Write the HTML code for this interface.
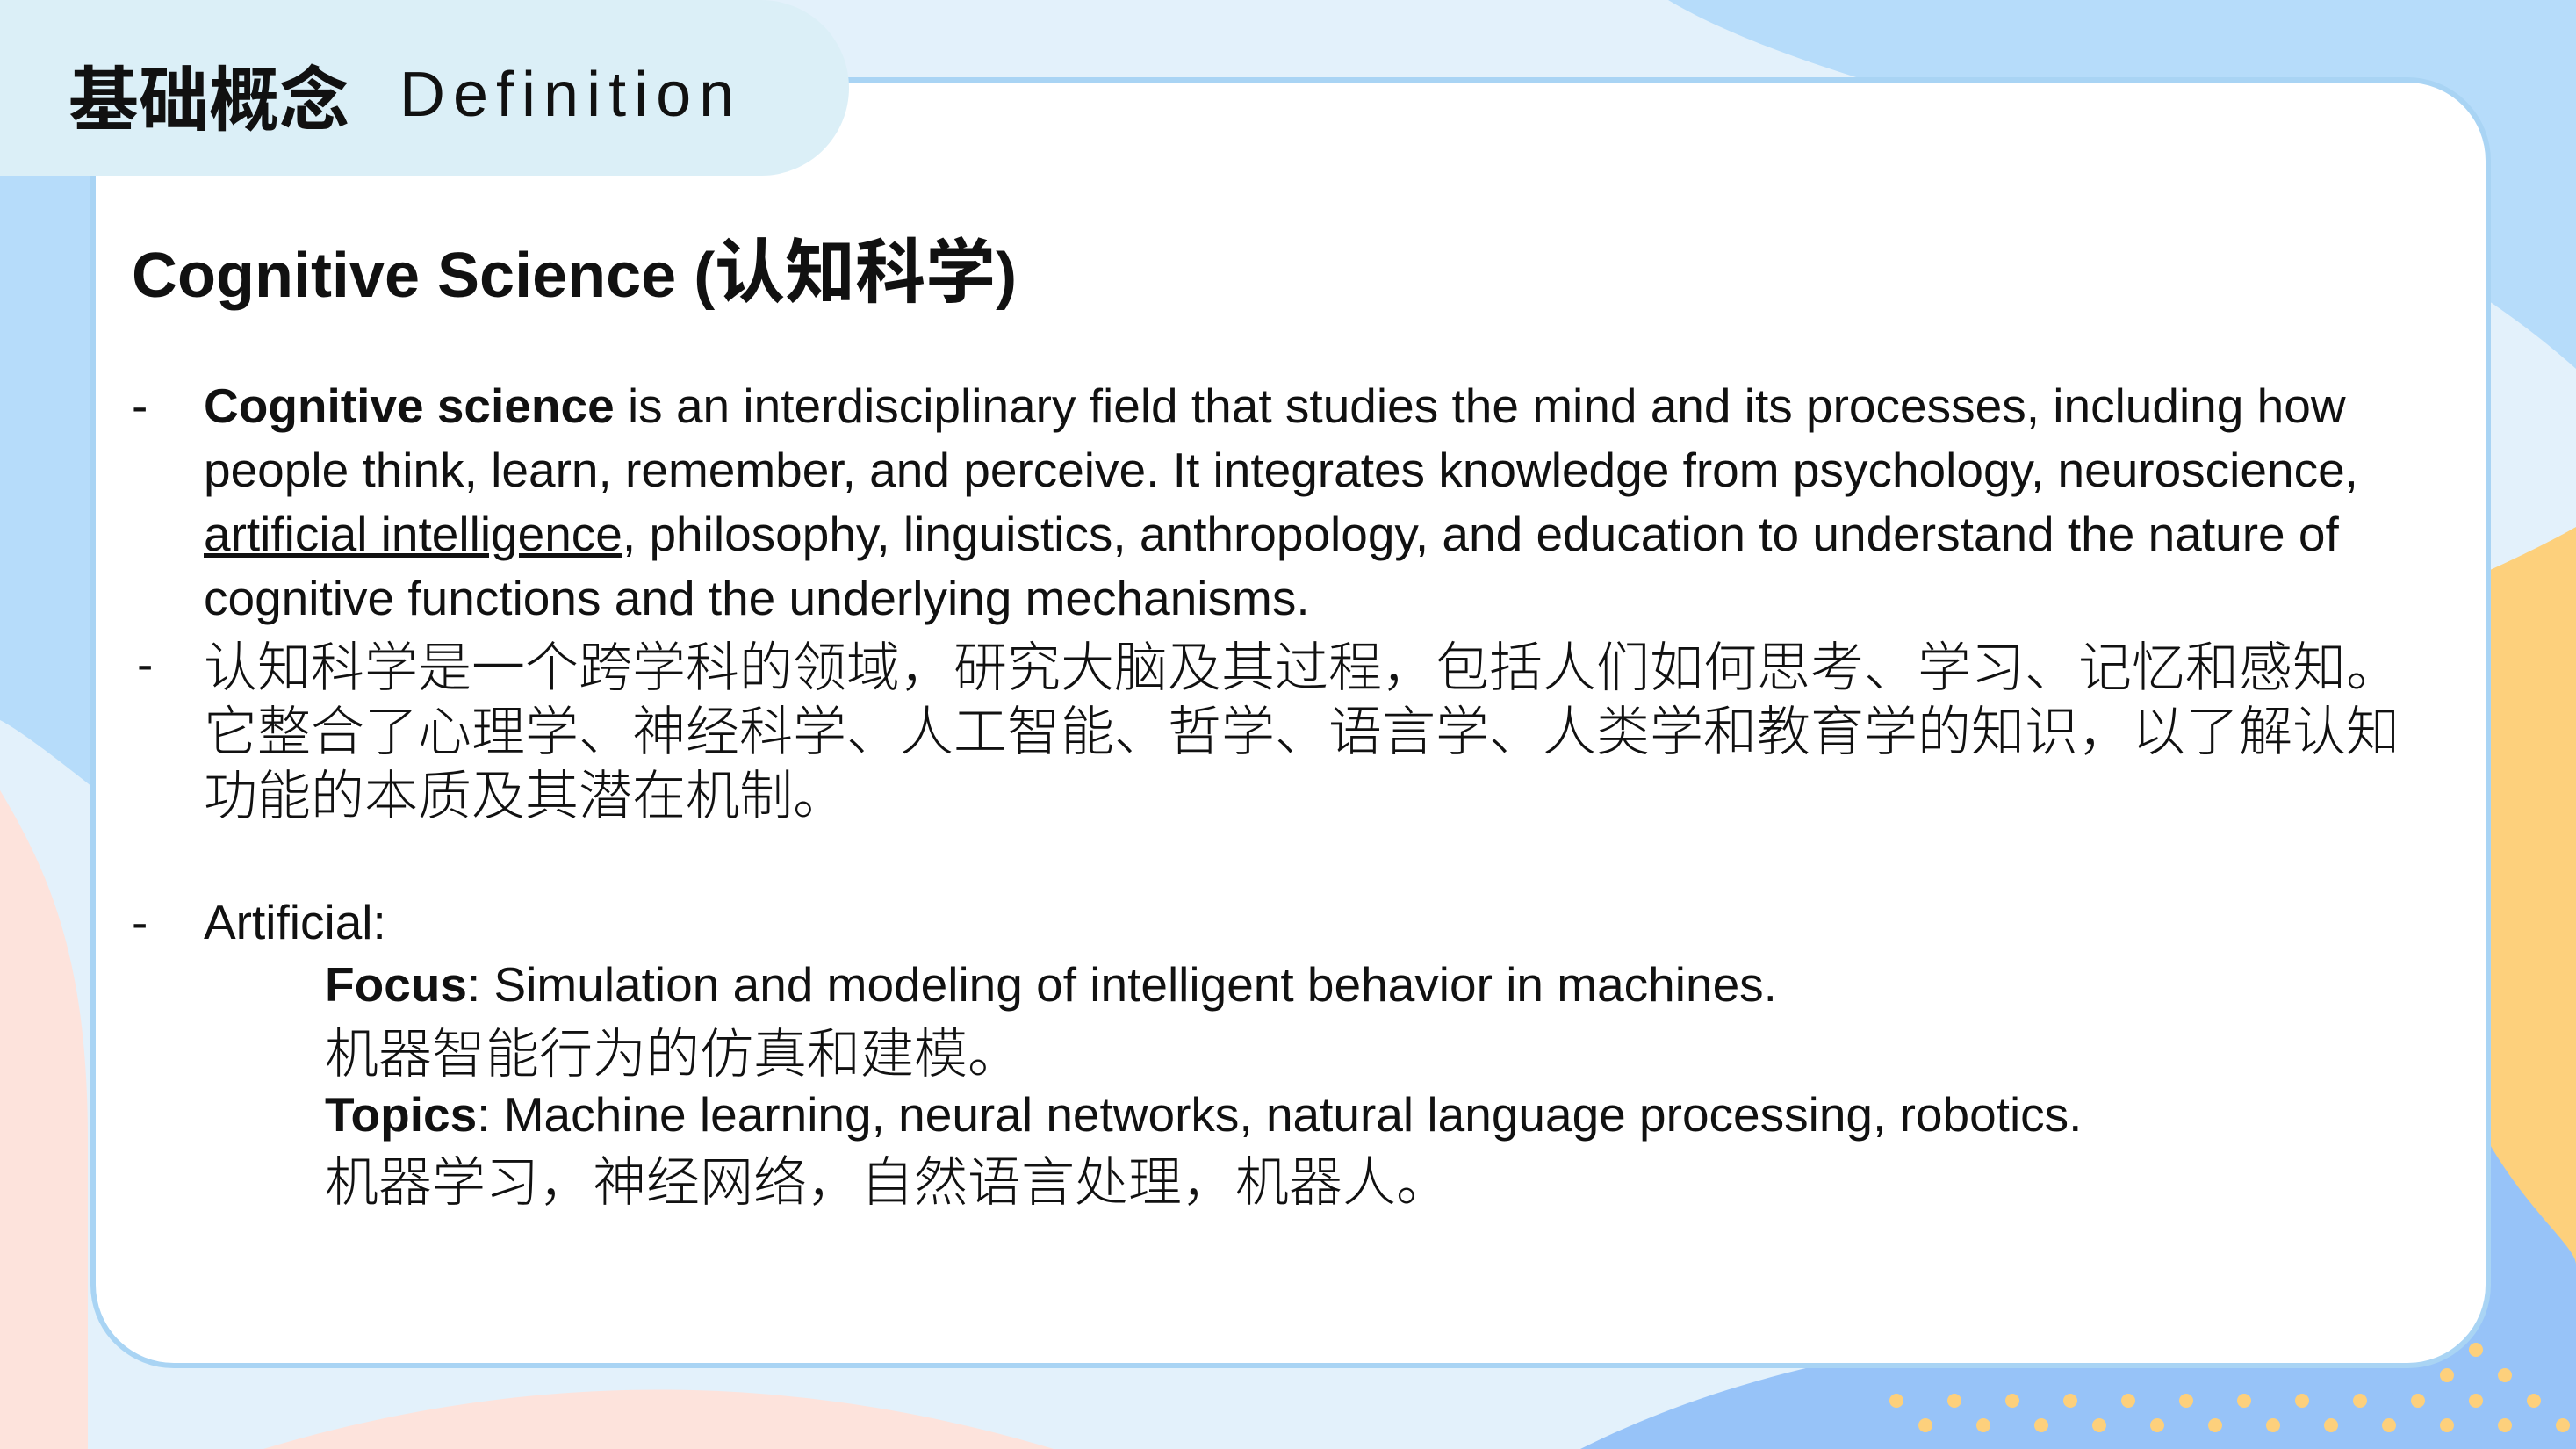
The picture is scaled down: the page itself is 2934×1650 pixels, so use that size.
<!DOCTYPE html>
<html><head><meta charset="utf-8"><style>
html,body{margin:0;padding:0}
body{width:2934px;height:1650px;position:relative;overflow:hidden;background:#e6f3fb;font-family:"Liberation Sans","Noto Sans CJK SC",sans-serif;color:#111}
.bg{position:absolute;left:0;top:0}
.card{position:absolute;left:103px;top:88px;width:2734px;height:1470px;background:#fff;border:6px solid #a9d4f4;border-radius:95px;box-sizing:border-box;overflow:hidden}
.tab{position:absolute;left:0;top:0;width:967px;height:200px;background:#dbeff7;border-radius:0 100px 100px 0}
.t{position:absolute;white-space:nowrap;line-height:73px;height:73px}
.l{font-size:55px}
.c{font-size:61px;font-family:"Noto Sans CJK SC",sans-serif;font-weight:300}
b{font-weight:bold}
</style></head><body>
<svg class="bg" width="2934" height="1650">
<rect width="2934" height="1650" fill="#e3f1fb"/>
<path d="M1900 0 H2934 V420 C2800 300 2600 200 2400 160 C2200 120 2000 60 1900 0Z" fill="#b6dcfa"/>
<path d="M0 150 H110 V900 C60 860 20 830 0 820Z" fill="#b6dcfa"/>
<path d="M2834 650 C2900 620 2934 600 2934 600 V1500 C2880 1450 2850 1400 2834 1350Z" fill="#fdd07c"/>
<path d="M0 900 C60 1000 100 1100 100 1300 V1650 H0Z" fill="#fde3dc"/>
<path d="M1800 1650 C2100 1500 2500 1480 2934 1560 V1650Z" fill="#97c3f8"/>
<path d="M2834 1300 C2880 1380 2934 1420 2934 1440 V1650 H2700 Z" fill="#97c3f8"/>
<path d="M300 1650 C600 1560 900 1560 1200 1650Z" fill="#fde3dc"/>
<g fill="#fdd07c">
<circle cx="2160" cy="1595" r="8"/><circle cx="2226" cy="1595" r="8"/><circle cx="2292" cy="1595" r="8"/><circle cx="2358" cy="1595" r="8"/><circle cx="2424" cy="1595" r="8"/><circle cx="2490" cy="1595" r="8"/><circle cx="2556" cy="1595" r="8"/><circle cx="2622" cy="1595" r="8"/><circle cx="2688" cy="1595" r="8"/><circle cx="2754" cy="1595" r="8"/><circle cx="2820" cy="1595" r="8"/><circle cx="2886" cy="1595" r="8"/>
<circle cx="2193" cy="1623" r="8"/><circle cx="2259" cy="1623" r="8"/><circle cx="2325" cy="1623" r="8"/><circle cx="2391" cy="1623" r="8"/><circle cx="2457" cy="1623" r="8"/><circle cx="2523" cy="1623" r="8"/><circle cx="2589" cy="1623" r="8"/><circle cx="2655" cy="1623" r="8"/><circle cx="2721" cy="1623" r="8"/><circle cx="2787" cy="1623" r="8"/><circle cx="2853" cy="1623" r="8"/><circle cx="2919" cy="1623" r="8"/>
<circle cx="2820" cy="1537" r="8"/><circle cx="2853" cy="1566" r="8"/><circle cx="2787" cy="1566" r="8"/>
</g>
</svg>
<div class="card"></div>
<div class="tab"></div>
<div class="t" style="left:78px;top:60px;line-height:96px;height:96px;font-size:80px;font-weight:bold;font-family:'Noto Sans CJK SC',sans-serif">基础概念</div>
<div class="t" style="left:455px;top:60px;line-height:96px;height:96px;font-size:72px;letter-spacing:9px">Definition</div>
<div class="t" style="left:150px;top:256px;line-height:96px;height:96px;font-size:72px;font-weight:bold">Cognitive Science (<span style="font-family:'Noto Sans CJK SC',sans-serif;font-size:80px">认知科学</span>)</div>

<div class="t l" style="left:150px;top:426px">-</div>
<div class="t l" style="left:232px;top:426px"><b>Cognitive science</b> is an interdisciplinary field that studies the mind and its processes, including how</div>
<div class="t l" style="left:232px;top:499px">people think, learn, remember, and perceive. It integrates knowledge from psychology, neuroscience,</div>
<div class="t l" style="left:232px;top:572px"><u>artificial intelligence</u>, philosophy, linguistics, anthropology, and education to understand the nature of</div>
<div class="t l" style="left:232px;top:645px">cognitive functions and the underlying mechanisms.</div>
<div class="t l" style="left:156px;top:720px">-</div>
<div class="t c" style="left:232px;top:718px">认知科学是一个跨学科的领域，研究大脑及其过程，包括人们如何思考、学习、记忆和感知。</div>
<div class="t c" style="left:232px;top:791px">它整合了心理学、神经科学、人工智能、哲学、语言学、人类学和教育学的知识，以了解认知</div>
<div class="t c" style="left:232px;top:864px">功能的本质及其潜在机制。</div>

<div class="t l" style="left:150px;top:1014px">-</div>
<div class="t l" style="left:232px;top:1014px">Artificial:</div>
<div class="t l" style="left:370px;top:1085px"><b>Focus</b>: Simulation and modeling of intelligent behavior in machines.</div>
<div class="t c" style="left:370px;top:1158px">机器智能行为的仿真和建模。</div>
<div class="t l" style="left:370px;top:1233px"><b>Topics</b>: Machine learning, neural networks, natural language processing, robotics.</div>
<div class="t c" style="left:370px;top:1304px">机器学习，神经网络，自然语言处理，机器人。</div>
</body></html>
